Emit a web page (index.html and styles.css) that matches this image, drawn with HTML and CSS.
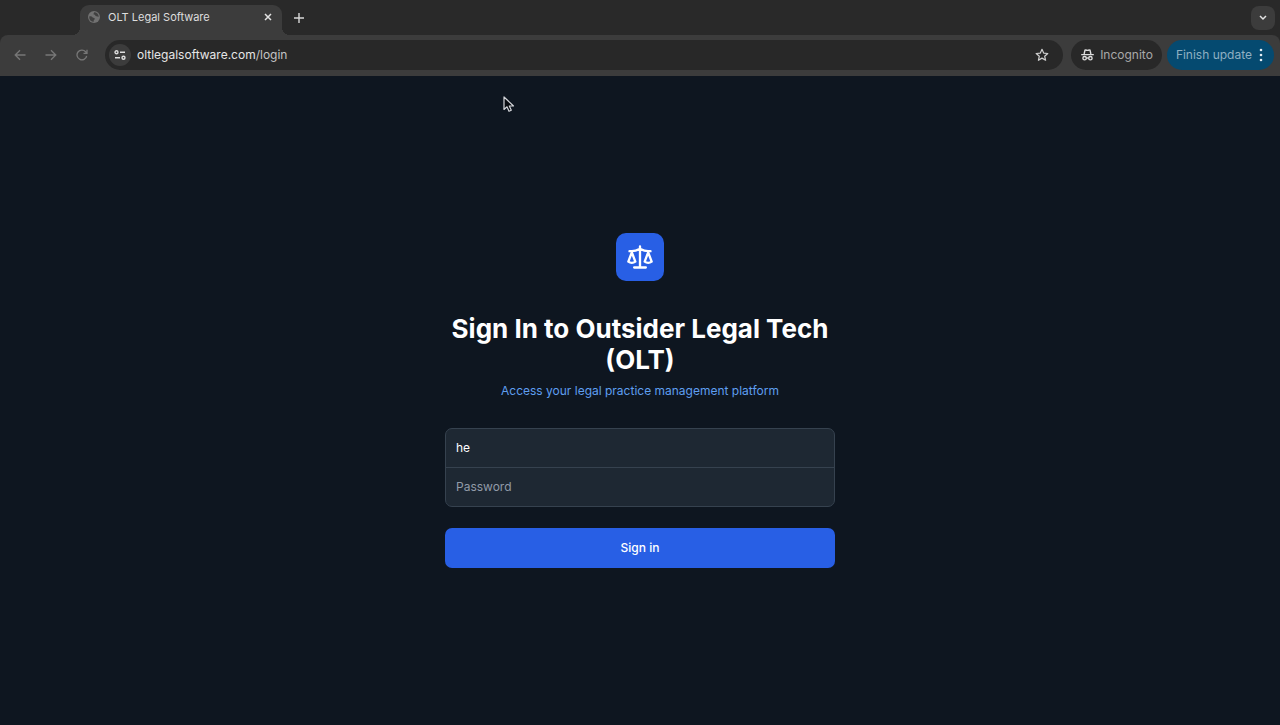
FILE: index.html
```html
<!DOCTYPE html>
<html lang="en">
<head>
<meta charset="utf-8">
<meta name="viewport" content="width=device-width, initial-scale=1">
<title>OLT Legal Software</title>
<link rel="stylesheet" href="styles.css">
</head>
<body class="browser">
<header class="chrome">
  <div class="tabstrip">
    <div class="tab">
      <svg class="favicon" viewBox="0 0 12 12" aria-hidden="true"><circle cx="6" cy="6" r="6" fill="#717171"/><path d="M1.200 5.600c1.600-.5 2.800-.2 3.300.7s1.700.3 2.200 1.200c.4.900-.6 1.200-1 2.100l-.2 1.300C2.600 10.700 1 8.500 1.200 5.600ZM6 1.200c.3.900-.8 1.300-.4 2 .4.800 1.400.4 1.700 1.300.3.800 1.300 1.100 3.500 1.200C10.700 3 8.500 1.100 6 1.200Z" fill="#404040"/></svg>
      <span class="tab-title">OLT Legal Software</span>
      <button class="icon-button" aria-label="Close tab"><svg width="8" height="8" viewBox="0 0 8 8"><path d="m1 1 6 6m0-6L1 7" stroke="#e3e3e3" stroke-width="1.500"/></svg></button>
    </div>
    <button class="icon-button new-tab" aria-label="New tab"><svg width="10" height="10" viewBox="0 0 10 10"><path d="M5 0v10M0 5h10" stroke="#d8d8d8" stroke-width="1.400"/></svg></button>
    <button class="icon-button tab-search" aria-label="Search tabs"><svg width="8" height="6" viewBox="0 0 8 6"><path d="m1 1 3 3 3-3" fill="none" stroke="#e3e3e3" stroke-width="1.500"/></svg></button>
  </div>
  <div class="toolbar">
    <nav class="history" aria-label="History">
      <button class="icon-button" aria-label="Back"><svg width="12" height="12" viewBox="0 0 12 12"><path d="M11.500 6H1.200M6 1.200 1.200 6 6 10.800" class="dim-stroke"/></svg></button>
      <button class="icon-button" aria-label="Forward"><svg width="12" height="12" viewBox="0 0 12 12"><path d="M.5 6h10.300M6 1.200 10.800 6 6 10.800" class="dim-stroke"/></svg></button>
      <button class="icon-button" aria-label="Reload"><svg width="12" height="12" viewBox="0 0 12 12"><path d="M10.700 7A4.900 4.900 0 1 1 9.600 2.700L10.800 4M11 .8V4.300H7.500" class="dim-stroke"/></svg></button>
    </nav>
    <div class="omnibox">
      <button class="icon-button site-info" aria-label="Site information"><svg width="12" height="10" viewBox="0 0 12 10"><g fill="none" stroke="#dedede" stroke-width="1.400"><circle cx="2.500" cy="2.300" r="1.500"/><path d="M6 2.300h5M1 7.700h5"/><circle cx="9.500" cy="7.700" r="1.500"/></g></svg></button>
      <span class="url">oltlegalsoftware.com<span class="url-path">/login</span></span>
      <button class="icon-button" aria-label="Bookmark this page"><svg width="14" height="14" viewBox="0 0 14 14"><path d="m7 1.300 1.650 3.800 4.150.38-3.130 2.730.93 4.050L7 10.130l-3.600 2.130.93-4.050L1.200 5.480l4.150-.38Z" fill="none" stroke="#d0d0d0" stroke-width="1.200" stroke-linejoin="round"/></svg></button>
    </div>
    <div class="chip incognito">
      <svg width="13" height="12" viewBox="0 0 13 12" aria-hidden="true"><g fill="none" stroke="#dedede" stroke-width="1.400"><path d="M3.100 5 4 1.100c1.200-.3 1.700.3 2.500.3S7.800.8 9 1.100L9.900 5M.2 5.600h12.600"/><circle cx="3.600" cy="9.200" r="1.700"/><circle cx="9.400" cy="9.200" r="1.700"/><path d="M5.300 9h2.400"/></g></svg>
      <span>Incognito</span>
    </div>
    <button class="chip update"><span>Finish update</span>
      <svg width="4" height="14" viewBox="0 0 4 14" aria-hidden="true" fill="#e3edf3"><circle cx="2" cy="2" r="1.300"/><circle cx="2" cy="7" r="1.300"/><circle cx="2" cy="12" r="1.300"/></svg>
    </button>
  </div>
</header>
<main class="page">
  <form class="login">
    <div class="logo"><svg width="28" height="28" viewBox="0 0 24 24" fill="none" stroke="#fff" stroke-width="2" stroke-linecap="round" stroke-linejoin="round" aria-hidden="true"><path d="m16 16 3-8 3 8c-.87.65-1.920 1-3 1s-2.130-.35-3-1Z"/><path d="m2 16 3-8 3 8c-.87.65-1.920 1-3 1s-2.130-.35-3-1Z"/><path d="M7 21h10M12 3v18M3 7h2c2 0 5-1 7-2 2 1 5 2 7 2h2"/></svg></div>
    <h1 class="title">Sign In to Outsider Legal Tech (OLT)</h1>
    <p class="subtitle">Access your legal practice management platform</p>
    <div class="fields">
      <input class="field" type="text" aria-label="Email address" placeholder="Email address" value="he">
      <input class="field" type="password" aria-label="Password" placeholder="Password">
    </div>
    <button class="submit" type="submit">Sign in</button>
  </form>
</main>
<svg class="cursor" width="12" height="17" viewBox="0 0 12 17" aria-hidden="true"><path d="M1 1v12.500l3-2.700 2 4.500 2.300-1-2-4.300h4.200Z" fill="#080b10" stroke="#d4d6da" stroke-width="1.200" stroke-linejoin="round"/></svg>
</body>
</html>
```
FILE: styles.css
```css
* {
  box-sizing: border-box;
}

.browser {
  display: flex;
  flex-direction: column;
  min-height: 100vh;
  margin: 0;
  background: #0e1620;
  color: #fff;
  font-family: Inter, "Liberation Sans", sans-serif;
  font-size: 12px;
}

button,
input {
  font: inherit;
  color: inherit;
}

.icon-button {
  display: flex;
  align-items: center;
  justify-content: center;
  flex: none;
  width: 24px;
  height: 24px;
  padding: 0;
  border: 0;
  border-radius: 8px;
  background: none;
}

.dim-stroke {
  fill: none;
  stroke: #777;
  stroke-width: 1.3;
}

.chrome {
  background: #292929;
}

.tabstrip {
  display: flex;
  align-items: center;
  height: 35px;
  padding: 0 5px 0 80px;
}

.tab {
  position: relative;
  display: flex;
  align-items: center;
  align-self: flex-end;
  gap: 8px;
  width: 202px;
  height: 30px;
  padding: 0 2px 6px 8px;
  border-radius: 9px 9px 0 0;
  background: #3c3c3c;
}

.tab::before,
.tab::after {
  content: "";
  position: absolute;
  bottom: 0;
  width: 8px;
  height: 8px;
}

.tab::before {
  right: 100%;
  background: radial-gradient(circle at 0 0, transparent 8px, #3c3c3c 8px);
}

.tab::after {
  left: 100%;
  background: radial-gradient(circle at 100% 0, transparent 8px, #3c3c3c 8px);
}

.favicon {
  flex: none;
  width: 12px;
  height: 12px;
}

.tab-title {
  flex: 1;
  color: #dedede;
  font-size: 11px;
  white-space: nowrap;
}

.new-tab {
  margin-left: 5px;
}

.tab-search {
  margin-left: auto;
  background: #3c3c3c;
}

.toolbar {
  display: flex;
  align-items: center;
  height: 41px;
  padding: 0 6px 2px 8px;
  border-radius: 8px 8px 0 0;
  background: #3c3c3c;
}

.history {
  display: flex;
  gap: 7px;
  margin-right: 11px;
}

.omnibox {
  display: flex;
  align-items: center;
  flex: 1;
  height: 30px;
  margin-right: 8px;
  padding: 0 9px 0 4px;
  border-radius: 15px;
  background: #282828;
}

.site-info {
  width: 22px;
  height: 22px;
  border-radius: 11px;
  background: #3c3c3c;
}

.url {
  flex: 1;
  margin-left: 6px;
  color: #e6e6e6;
}

.url-path {
  color: #c4c4c4;
}

.chip {
  display: flex;
  align-items: center;
  height: 30px;
  border: 0;
  border-radius: 15px;
  white-space: nowrap;
}

.incognito {
  gap: 6px;
  margin-right: 5px;
  padding: 0 9px 0 10px;
  background: #282828;
  color: #a8a8a8;
}

.update {
  gap: 7px;
  padding: 0 11px 0 9px;
  background: #054a70;
  color: #8fb0c3;
}

.page {
  display: flex;
  flex: 1;
  align-items: center;
  justify-content: center;
  padding: 24px;
}

.login {
  display: flex;
  flex-direction: column;
  width: 100%;
  max-width: 390px;
}

.logo {
  display: flex;
  align-items: center;
  justify-content: center;
  align-self: center;
  width: 48px;
  height: 48px;
  border-radius: 10px;
  background: #285fe5;
}

.title {
  margin: 32px 0 6px;
  font-size: 26px;
  font-weight: 700;
  line-height: 31px;
  text-align: center;
}

.subtitle {
  margin: 0 0 27px;
  color: #5f9ff0;
  line-height: 20px;
  text-align: center;
}

.fields {
  display: flex;
  flex-direction: column;
  overflow: hidden;
  margin-bottom: 21px;
  border: 1px solid #36424f;
  border-radius: 7px;
  background: #1e2833;
}

.field {
  width: 100%;
  height: 38px;
  padding: 0 10px 2px;
  border: 0;
  outline: 0;
  background: none;
}

.field + .field {
  height: 39px;
  border-top: 1px solid #36424f;
}

.field::placeholder {
  color: #929ba8;
  opacity: 1;
}

.submit {
  height: 40px;
  padding: 0 16px 2px;
  border: 0;
  border-radius: 7px;
  background: #285fe5;
  font-weight: 500;
}

.cursor {
  position: absolute;
  top: 96px;
  left: 503px;
}
```
